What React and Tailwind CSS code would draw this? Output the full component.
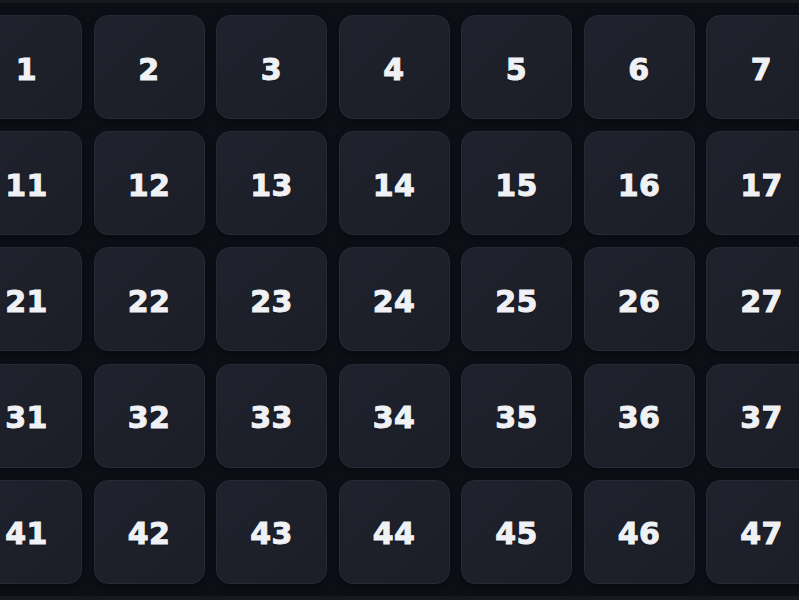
export default function App() {
  const rows = [0, 1, 2, 3, 4];
  const cols = [1, 2, 3, 4, 5, 6, 7, 8, 9, 10];
  return (
    <div className="h-[600px] w-[799px] overflow-hidden bg-[#171a21] pt-[3px]">
      <div className="h-[593px] overflow-hidden bg-[#0c0f16] pt-[12px]">
        <div className="-ml-[29px] grid w-max grid-cols-[repeat(10,111px)] gap-x-[11.5px] gap-y-[12.2px]">
          {rows.map((r) =>
            cols.map((c) => {
              const n = r * 10 + c;
              return (
                <div
                  key={n}
                  className="flex h-[104px] items-center justify-center rounded-[14px] border border-[#262a34] bg-gradient-to-br from-[#1f222c] to-[#1b1e27] shadow-[0_2px_6px_rgba(0,0,0,0.4)]"
                >
                  <span className="pt-[5px] font-['DejaVu_Sans',sans-serif] text-[30px] font-bold leading-none tracking-[0.5px] text-[#f0f1f5] [-webkit-text-stroke:1px_#f0f1f5] [text-shadow:0_1px_2px_rgba(0,0,0,0.6)]">
                    {n}
                  </span>
                </div>
              );
            })
          )}
        </div>
      </div>
    </div>
  );
}
